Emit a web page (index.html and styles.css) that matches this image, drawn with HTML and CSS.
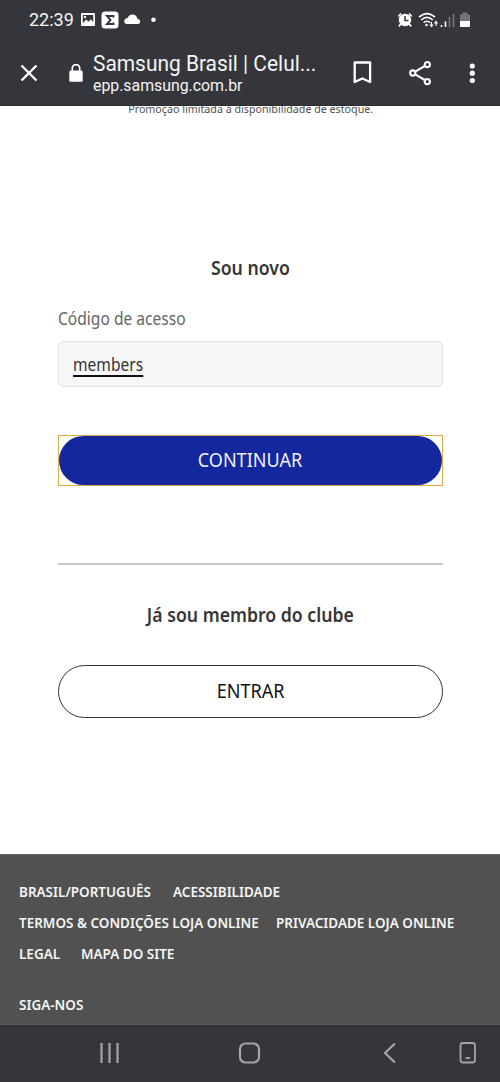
FILE: index.html
```html
<!DOCTYPE html>
<html lang="pt-BR">
<head>
<meta charset="utf-8">
<meta name="viewport" content="width=device-width">
<title>Samsung Brasil</title>
<link rel="stylesheet" href="styles.css">
</head>
<body>
<header class="chrome">
  <div class="status">
    <span class="clock">22:39</span>
    <svg class="status-left" width="80" height="20" viewBox="0 0 80 20">
      <path fill="#fff" fill-rule="evenodd" d="M2 3h12a1 1 0 0 1 1 1v11a1 1 0 0 1-1 1H2a1 1 0 0 1-1-1V4a1 1 0 0 1 1-1zm.8 2v8.2l3.500-3.600 2.200 2.200 2.300-2.600 2.400 2.700V5z"/>
      <circle cx="5" cy="7" r="1.200" fill="#fff"/>
      <rect x="21.500" y="1.500" width="17" height="17" rx="3.500" fill="#fff"/>
      <path d="M33.500 7.500V6h-6.500l3.500 4-3.500 4h6.500v-1.500" fill="none" stroke="#35363b" stroke-width="1.900"/>
      <path fill="#fff" d="M46 14a3 3 0 0 1-.5-5.200c.6-.6 1.500-.8 2.300-.7a5 5 0 0 1 9-1.200c.6 1.200.7 1.700.7 2.200 1.800.2 2.600 1.200 2.700 2.500 0 1.500-.8 2.400-2 2.400z"/>
      <circle cx="73.500" cy="9.700" r="2.300" fill="#fff"/>
    </svg>
    <svg class="status-right" width="78" height="20" viewBox="0 0 78 20">
      <g stroke="#fff" fill="none">
        <circle cx="8" cy="10" r="6.200" fill="#fff" stroke="none"/>
        <path d="M8 6v4.500h3.500" stroke="#35363b" stroke-width="1.500"/>
        <path d="M1.300 6.500 4 3.500M12 3.500l2.700 3M3.800 14l-2 2.400M12.200 14l2 2.400" stroke-width="1.800"/>
        <path d="M22 7.200q8-7.200 16 0M24.200 10q5.800-5.200 11.600 0M26.700 12.700q3.300-2.900 6.600 0" stroke-width="1.600"/>
      </g>
      <circle cx="29.500" cy="15" r="1.300" fill="#fff"/>
      <path d="M34.500 12v4.500M33 14.500l1.500 2 1.500-2M39 16V11.500M37.500 13.500l1.500-2 1.500 2" stroke="#fff" stroke-width="1.100" fill="none"/>
      <path d="M44.500 17v-2M48.500 17v-5.500" stroke="#fff" stroke-width="1.600"/>
      <path d="M52.500 17V7M56.500 17V4" stroke="#77787c" stroke-width="1.600"/>
      <path d="M63 4.500h2.500v-2h5v2H73V11H63z" fill="#737478"/>
      <path d="M63 11h10v5a1 1 0 0 1-1 1h-8a1 1 0 0 1-1-1z" fill="#fff"/>
    </svg>
  </div>
  <div class="toolbar">
    <svg class="close" width="18" height="18" viewBox="0 0 18 18"><path d="m1.500 1.500 15 15m0-15-15 15" stroke="#fff" stroke-width="2.400"/></svg>
    <svg class="lock" width="14" height="18" viewBox="0 0 14 18"><rect x=".3" y="6.500" width="13.400" height="11.200" rx="1.500" fill="#fff"/><path d="M3.300 7V4.300a3.700 3.700 0 0 1 7.400 0V7" fill="none" stroke="#fff" stroke-width="1.700"/></svg>
    <div class="page-id">
      <div class="page-title"><span>Samsung Brasil | Celul...</span></div>
      <div class="page-host"><span>epp.samsung.com.br</span></div>
    </div>
    <svg class="tools" width="130" height="28" viewBox="0 0 130 28">
      <path d="M9.700 3.500h15.400v19.500l-7.700-3.500-7.700 3.500z" fill="none" stroke="#fff" stroke-width="2.300" stroke-linejoin="round"/>
      <g fill="none" stroke="#fff" stroke-width="2.100"><path d="m70.200 12.600 9.600-5.600M70.200 15.400l9.600 5.600"/><circle cx="67.800" cy="14" r="2.600"/><circle cx="82.300" cy="5.600" r="2.600"/><circle cx="82.300" cy="22.600" r="2.600"/></g>
      <g fill="#fff"><circle cx="127.300" cy="7" r="2.600"/><circle cx="127.300" cy="14.200" r="2.600"/><circle cx="127.300" cy="21.500" r="2.600"/></g>
    </svg>
  </div>
</header>
<main class="content">
  <p class="notice"><span>Promoção limitada à disponibilidade de estoque.</span></p>
  <h2 class="title title-new"><span>Sou novo</span></h2>
  <label class="label"><span>Código de acesso</span></label>
  <div class="field"><span>members</span></div>
  <div class="focus"><button class="button primary"><span>CONTINUAR</span></button></div>
  <hr class="rule">
  <h2 class="title title-member"><span>Já sou membro do clube</span></h2>
  <button class="button secondary"><span>ENTRAR</span></button>
</main>
<footer class="footer">
  <div class="links"><a class="w-brasil"><span>BRASIL/PORTUGUÊS</span></a><a><span>ACESSIBILIDADE</span></a></div>
  <div class="links"><a class="w-termos"><span>TERMOS &amp; CONDIÇÕES LOJA ONLINE</span></a><a><span>PRIVACIDADE LOJA ONLINE</span></a></div>
  <div class="links"><a class="w-legal"><span>LEGAL</span></a><a><span>MAPA DO SITE</span></a></div>
  <div class="links follow"><a><span>SIGA-NOS</span></a></div>
</footer>
<nav class="nav">
  <svg width="500" height="57" viewBox="0 0 500 57" fill="none" stroke="#a5a5a9" stroke-width="2.200">
    <path d="M101.500 18v20M109.500 18v20M117.500 18v20"/>
    <rect x="240" y="18.500" width="19" height="19" rx="5.500"/>
    <path d="m395 18.500-10 9.500 10 9.500"/>
    <rect x="460.500" y="18" width="14.500" height="19.500" rx="2.500" stroke-width="1.800"/>
    <path d="M465.500 33h4.500" stroke-width="1.800"/>
  </svg>
</nav>
</body>
</html>
```
FILE: styles.css
```css
* { box-sizing: border-box; }
body { margin: 0; width: 500px; height: 1082px; overflow: hidden; background: #fff; display: flex; flex-direction: column; font-family: "Noto Sans", "Open Sans", sans-serif; }
svg { display: block; flex: none; }
span { display: inline-block; white-space: nowrap; }

.chrome { height: 106px; flex: none; background: #35363b; color: #f4f4f5; font-family: Roboto, sans-serif; border-bottom: 1px solid #2c2d31; }
.status { height: 40px; display: flex; align-items: center; padding: 0 25px 0 29px; }
.clock { width: 51px; font-size: 18px; line-height: 20px; }
.status-right { margin-left: auto; }
.toolbar { height: 65px; display: flex; align-items: center; padding: 0 22px 0 20px; }
.lock { margin-left: 31px; }
.page-id { margin-left: 10px; width: 230px; white-space: nowrap; padding-top: 1px; }
.page-title { font-size: 22px; line-height: 25px; }
.page-title span { transform: scaleX(.95); transform-origin: left; }
.page-host { font-size: 16px; line-height: 20px; }
.page-host span { transform: scaleX(.99); transform-origin: left; }
.tools { margin-left: auto; margin-right: 3px; }

.content { height: 748px; flex: none; padding: 0 57px 0 58px; overflow: hidden; }
.notice { margin: -6px 0 0; height: 18px; text-align: center; font-size: 11.5px; line-height: 18px; color: #505050; }
.notice span { transform: scaleX(.93); }
.title { margin: 0; text-align: center; font-size: 19px; line-height: 28px; font-weight: 600; color: #363636; }
.title-new { margin-top: 136px; }
.title span { transform: scaleX(.93); }
.label { display: block; margin-top: 23px; height: 26px; font-size: 17.5px; line-height: 26px; color: #666; }
.label span, .field span { transform: scaleX(.89); transform-origin: left; }
.field { margin-top: 10px; height: 46px; border: 1px solid #e2e2e2; border-radius: 5px; background: #f7f7f7; padding: 11px 14px; font-size: 17.5px; line-height: 22px; color: #333; }
.field span { border-bottom: 2px solid #111; line-height: 21px; }
.focus { margin-top: 48px; height: 51px; border: 1px solid #dfac43; background: #fff; }
.button { display: block; width: 100%; padding: 0 0 1px; font: 400 19px/28px "Noto Sans", sans-serif; border-radius: 27px; }
.button span { transform: scaleX(.95); }
.primary { height: 49px; border: 0; background: #14279d; color: #eef1ff; }
.rule { height: 2px; margin: 77px 0 0; border: 0; background: #c8c8c8; }
.title-member { margin-top: 36px; }
.secondary { height: 53px; margin-top: 36px; border: 1px solid #333; background: #fff; color: #111; }

.footer { height: 170px; flex: none; padding: 21px 0 0 19px; background: #515151; border-top: 1px solid #666; }
.links { display: flex; gap: 20px; height: 31px; font-size: 14.5px; line-height: 31px; font-weight: 600; color: #f5f5f5; }
.links span { transform: scaleX(.93); transform-origin: left; }
.w-brasil { width: 134px; }
.w-termos { width: 237px; }
.w-legal { width: 42px; }
.follow { margin-top: 20px; }
.nav { height: 58px; flex: none; background: #35363b; border-top: 1px solid #58595d; }
```
